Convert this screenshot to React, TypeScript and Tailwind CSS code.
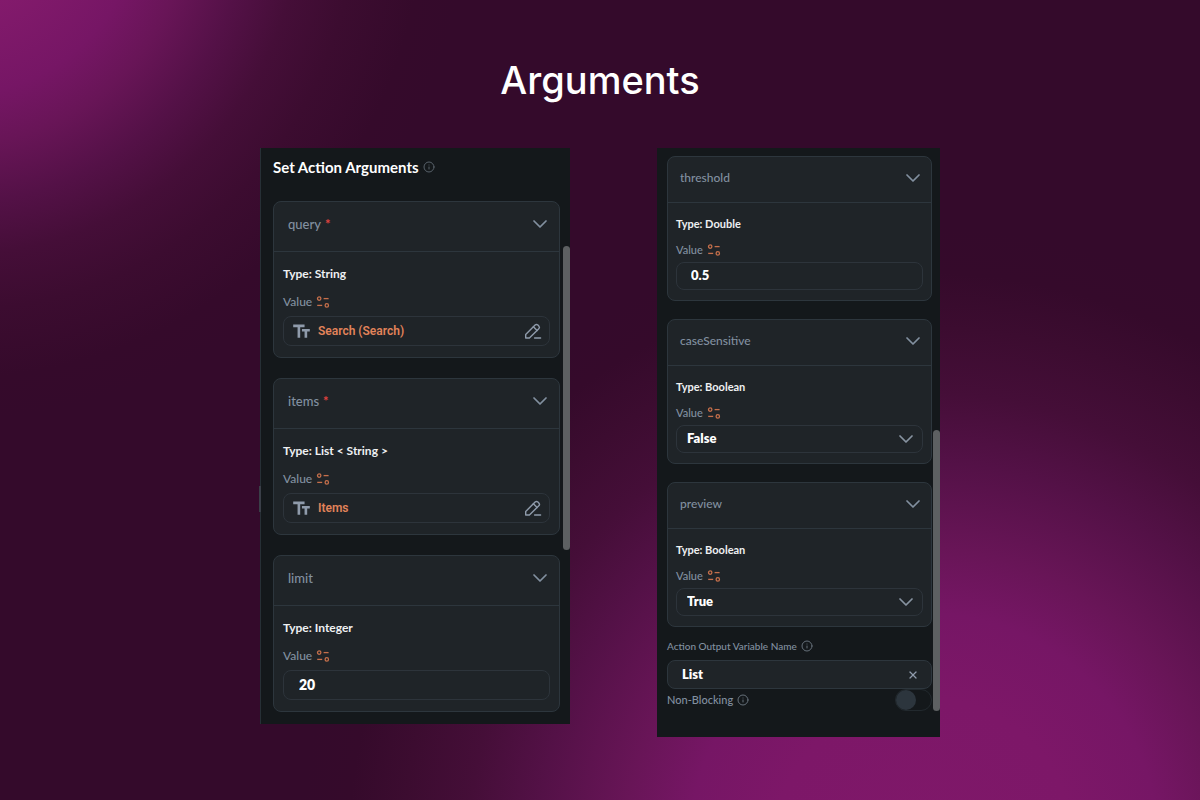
import { useState } from 'react'
import type { ReactNode } from 'react'
import { Info, X } from 'lucide-react'
import { MdTextFields } from 'react-icons/md'
import clsx from 'clsx'

type Argument = {
  name: string
  type: string
  required?: boolean
  kind: 'variable' | 'text' | 'select'
  value: string
}

const leftArguments: Argument[] = [
  { name: 'query', type: 'String', required: true, kind: 'variable', value: 'Search (Search)' },
  { name: 'items', type: 'List < String >', required: true, kind: 'variable', value: 'Items' },
  { name: 'limit', type: 'Integer', kind: 'text', value: '20' },
]

const rightArguments: Argument[] = [
  { name: 'threshold', type: 'Double', kind: 'text', value: '0.5' },
  { name: 'caseSensitive', type: 'Boolean', kind: 'select', value: 'False' },
  { name: 'preview', type: 'Boolean', kind: 'select', value: 'True' },
]

function Chevron({ className }: { className?: string }) {
  return (
    <svg
      viewBox="0 0 14 8"
      className={clsx('h-2 w-3.5 shrink-0', className)}
      fill="none"
      stroke="currentColor"
      strokeWidth="1.7"
      strokeLinecap="round"
      strokeLinejoin="round"
    >
      <path d="M1 1l6 6 6-6" />
    </svg>
  )
}

function BindingIcon() {
  return (
    <svg viewBox="0 0 14 14" className="h-3.5 w-3.5" fill="none" stroke="currentColor" strokeWidth="1.3">
      <circle cx="3.2" cy="3.6" r="1.7" />
      <path d="M7.6 3.6h5" />
      <circle cx="10.8" cy="10.4" r="1.7" />
      <path d="M1.2 10.4h5" />
    </svg>
  )
}

function EditIcon() {
  return (
    <svg
      viewBox="0 0 18 18"
      className="h-[18px] w-[18px]"
      fill="none"
      stroke="currentColor"
      strokeWidth="1.4"
      strokeLinecap="round"
      strokeLinejoin="round"
    >
      <path d="M1.7 16v-3.5l9.4-9.4a2 2 0 0 1 2.8 0l.9.9a2 2 0 0 1 0 2.8L5.4 16z" />
      <path d="M9.4 4.8l3.7 3.7M10.6 16h6" />
    </svg>
  )
}

function ArgumentField({ argument, compact }: { argument: Argument; compact: boolean }) {
  const [value, setValue] = useState(argument.value)
  const id = `${argument.name}-value`
  const box = clsx('w-full rounded-lg border border-[#2d343b] bg-[#1f2428]', compact ? 'h-7' : 'h-[30px]')

  if (argument.kind === 'variable') {
    return (
      <div className={clsx(box, 'flex items-center px-[7px]')}>
        <MdTextFields className="h-[21px] w-[21px] shrink-0 text-[#8f9bab]" />
        <output id={id} className="ml-1.5 flex-1 font-['Roboto',sans-serif] text-xs leading-4 font-semibold text-[#e2835a]">
          {value}
        </output>
        <button type="button" aria-label={`Edit ${argument.name}`} className="text-[#8f9bab]">
          <EditIcon />
        </button>
      </div>
    )
  }

  if (argument.kind === 'select') {
    return (
      <div className="relative">
        <select
          id={id}
          value={value}
          onChange={(e) => setValue(e.target.value)}
          className={clsx(box, 'block appearance-none px-2.5 pb-0.5 text-[13px] leading-4 font-extrabold text-white')}
        >
          <option>True</option>
          <option>False</option>
        </select>
        <Chevron className="pointer-events-none absolute top-2.5 right-2.5 text-[#8793a1]" />
      </div>
    )
  }

  return (
    <input
      id={id}
      type="text"
      value={value}
      onChange={(e) => setValue(e.target.value)}
      className={clsx(box, 'block pb-0.5 font-extrabold text-white', compact ? 'px-3.5 text-[13px]' : 'px-[15px] text-sm')}
    />
  )
}

function ArgumentCard({ argument, compact = false }: { argument: Argument; compact?: boolean }) {
  const [open, setOpen] = useState(true)

  return (
    <section className="rounded-lg border border-[#2d363d] bg-[#1f2428]">
      <button
        type="button"
        aria-expanded={open}
        onClick={() => setOpen(!open)}
        className={clsx(
          'flex w-full items-center justify-between border-b border-[#2d363d] text-[#8290a0]',
          compact ? 'h-[46px] pr-[11px] pb-1 pl-3' : 'h-[50px] pr-3 pb-1.5 pl-3.5',
        )}
      >
        <span className={clsx('leading-5 font-medium', compact ? 'text-xs' : 'text-[13px]')}>
          {argument.name}
          {argument.required && <span className="ml-1 font-bold text-[#e0423f]">*</span>}
        </span>
        <Chevron />
      </button>

      {open && (
        <div className={compact ? 'px-2 pt-[11px] pb-2.5' : 'px-[9px] pt-3 pb-[11px]'}>
          <p className={clsx('leading-5 font-bold text-[#eef0f2]', compact ? 'text-[11px]' : 'text-xs')}>
            Type: {argument.type}
          </p>
          <div className={clsx('flex items-center gap-1 text-[#8290a0]', compact ? 'mt-1.5 mb-0.5' : 'mt-2 mb-1')}>
            <label
              htmlFor={`${argument.name}-value`}
              className={clsx('leading-5 font-medium', compact ? 'text-[11px]' : 'text-xs')}
            >
              Value
            </label>
            <span className="text-[#c56f4b]">
              <BindingIcon />
            </span>
          </div>
          <ArgumentField argument={argument} compact={compact} />
        </div>
      )}
    </section>
  )
}

function Panel({ children, scrollbar, className }: { children: ReactNode; scrollbar: string; className?: string }) {
  return (
    <div className={clsx('relative w-full bg-[#14181b]', className)}>
      {children}
      <div className={clsx('absolute right-0 w-[7px] rounded-full bg-[#5d6062]', scrollbar)} />
    </div>
  )
}

export default function App() {
  const [outputName, setOutputName] = useState('List')
  const [nonBlocking, setNonBlocking] = useState(false)

  return (
    <main className="min-h-screen bg-[#340a2b] bg-[radial-gradient(circle_at_-45px_-90px,#831a6c_100px,#761665_185px,#681557_235px,#541147_292px,#450e38_345px,#3c0c30_400px,#350a2b_468px,#340a2b_510px,transparent_511px),radial-gradient(circle_at_77%_106%,#7f1869_0px,#7d1768_150px,#761665_235px,#681557_300px,#541147_385px,#450e38_455px,#3c0c30_520px,#350a2b_575px,#340a2b_622px)] px-6 pb-10 font-['Lato',sans-serif]">
      <h1 className="pt-14 text-center font-['Inter',sans-serif] text-[38px] leading-12 font-medium text-white">Arguments</h1>

      <div className="mt-11 flex items-start justify-center gap-[87px]">
        <Panel className="max-w-[310px] border-l border-[#273036] pr-2.5 pb-3 pl-3" scrollbar="top-[98px] bottom-[174px]">
          <div className="absolute top-[338px] -left-0.5 h-[26px] w-0.5 bg-[#3a3f48]" />
          <header className="flex items-center gap-1 pt-[9px] pb-6">
            <h2 className="text-[15px] leading-5 font-bold text-white">Set Action Arguments</h2>
            <Info className="h-3 w-3 text-[#59626b]" />
          </header>
          <div className="space-y-5">
            {leftArguments.map((argument) => (
              <ArgumentCard key={argument.name} argument={argument} />
            ))}
          </div>
        </Panel>

        <Panel className="max-w-[283px] px-2 pt-2 pb-[26px] pl-2.5" scrollbar="top-[282px] bottom-[26px]">
          <div className="space-y-[18px]">
            {rightArguments.map((argument) => (
              <ArgumentCard key={argument.name} argument={argument} compact />
            ))}
          </div>

          <div className="mt-[9px] mb-1 flex items-center gap-1 text-[#8290a0]">
            <label htmlFor="output-name" className="text-[10px] leading-5 font-medium">
              Action Output Variable Name
            </label>
            <Info className="h-3 w-3 text-[#66707a]" />
          </div>
          <div className="flex h-[29px] items-center rounded-lg border border-[#2d363d] bg-[#1f2428] pr-3 pl-3.5">
            <input
              id="output-name"
              type="text"
              value={outputName}
              onChange={(e) => setOutputName(e.target.value)}
              className="min-w-0 flex-1 bg-transparent pb-0.5 text-[13px] leading-4 font-extrabold text-white"
            />
            <button type="button" aria-label="Clear name" onClick={() => setOutputName('')} className="text-[#8f9bab]">
              <X className="h-3 w-3" strokeWidth={2.5} />
            </button>
          </div>

          <div className="flex items-center gap-1 text-[#8290a0]">
            <label htmlFor="non-blocking" className="text-[11px] leading-5 font-medium">
              Non-Blocking
            </label>
            <Info className="h-3 w-3 text-[#66707a]" />
            <input
              id="non-blocking"
              type="checkbox"
              role="switch"
              checked={nonBlocking}
              onChange={(e) => setNonBlocking(e.target.checked)}
              className="ml-auto h-[22px] w-[37px] appearance-none rounded-full border border-[#22292e] before:block before:h-5 before:w-5 before:rounded-full before:bg-[#2c353d] checked:before:translate-x-[15px]"
            />
          </div>
        </Panel>
      </div>
    </main>
  )
}
